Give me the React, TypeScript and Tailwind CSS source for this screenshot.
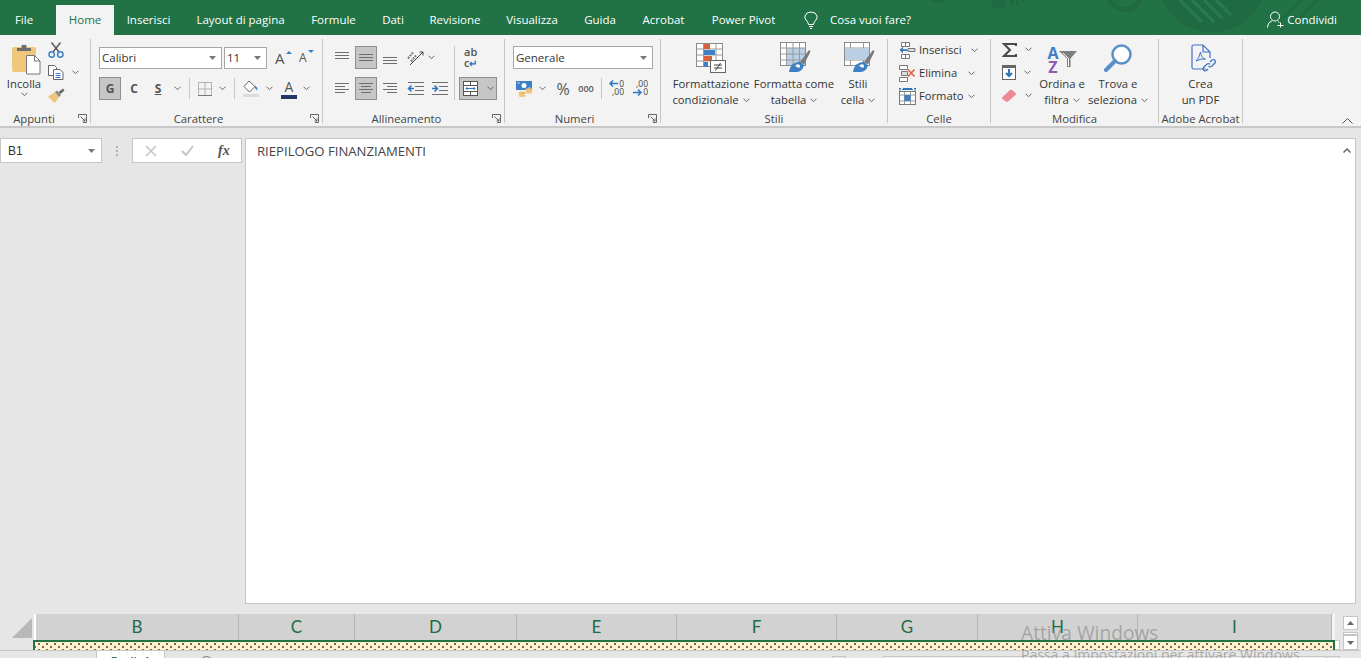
import React from "react";

const Chev = ({ className = "" }: { className?: string }) => (
  <svg width="7" height="5" viewBox="0 0 7 5" className={"shrink-0 " + className}>
    <path d="M.5.7 3.5 3.7 6.5.7" fill="none" stroke="#666" />
  </svg>
);
const Tri = () => (
  <svg width="7" height="4" viewBox="0 0 7 4" className="shrink-0">
    <path d="M0 0h7L3.500 4z" fill="#777" />
  </svg>
);
const Launcher = () => (
  <svg width="9" height="9" viewBox="0 0 9 9" className="absolute right-[3px] bottom-0">
    <path d="M.5 4V.5H8.500V8.500H5M2.500 2.500 7 7M4.500 7H7V4.500" fill="none" stroke="#666" />
  </svg>
);

const Group = ({ w, label, launcher, labelPad = "", children }: { w: string; label: string; launcher?: boolean; labelPad?: string; children: React.ReactNode }) => (
  <section className={"relative flex h-[84px] flex-col border-r border-[#c6c6c6] " + w}>
    <div className="flex h-[72px] min-h-0 shrink-0">{children}</div>
    <div className={"mt-[1px] shrink-0 whitespace-nowrap text-center text-[11.3px] leading-[13px] text-[#444] " + labelPad}>{label}</div>
    {launcher && <Launcher />}
  </section>
);

const Big = ({ w, icon, l1, l2, chev = true }: { w: string; icon: React.ReactNode; l1: string; l2: string; chev?: boolean }) => (
  <div className={"flex flex-col items-center text-[11.3px] leading-[16px] text-[#333] " + w}>
    <div className="flex h-[37px] items-center justify-center">{icon}</div>
    <div className="whitespace-nowrap">{l1}</div>
    <div className="flex items-center gap-[4px] whitespace-nowrap">
      {l2}
      {chev && <Chev />}
    </div>
  </div>
);

const Lines = ({ v, h }: { v: "top" | "mid" | "bot" | "none"; h: "l" | "c" | "r" }) => {
  const w = [14, 10, 14, 10];
  const ys = v === "top" ? [2, 5, 8] : v === "mid" ? [4, 7, 10] : v === "bot" ? [7, 10, 13] : [2, 5, 8, 11];
  return (
    <svg width="16" height="15" viewBox="0 0 16 15">
      {ys.map((y, i) => {
        const ln = v === "none" ? w[i] : 14;
        const x = h === "l" ? 1 : h === "r" ? 15 - ln : 8 - ln / 2;
        return <path key={y} d={`M${x} ${y + 0.5}h${ln}`} stroke="#6e6e6e" />;
      })}
    </svg>
  );
};

const Sel = ({ on, w = "w-[22px]", children }: { on?: boolean; w?: string; children: React.ReactNode }) => (
  <div className={"flex h-[23px] items-center justify-center " + w + " " + (on ? "border border-[#8f8f8f] bg-[#c6c6c6]" : "")}>
    {children}
  </div>
);

const Paste = () => (
  <svg width="29" height="31" viewBox="0 0 29 31">
    <rect x="0" y="3" width="24" height="25" rx="2" fill="#f0c87d" />
    <path d="M5 7V4h4.500V1.500Q12 0 14.500 1.500V4H19v3z" fill="#6d6d6d" />
    <path d="M14.500 11.500h8l5.500 5.500v13H14.500z" fill="#fff" stroke="#777" />
    <path d="M22.500 11.500V17H28" fill="none" stroke="#777" />
  </svg>
);
const Scissors = () => (
  <svg width="16" height="16" viewBox="0 0 16 16">
    <path d="M5 10 12.500.5M11 10 3.500.5" stroke="#5a5a5a" strokeWidth="1.500" fill="none" />
    <circle cx="3.700" cy="12.500" r="2.700" fill="none" stroke="#3f80c4" strokeWidth="1.500" />
    <circle cx="12.300" cy="12.500" r="2.700" fill="none" stroke="#3f80c4" strokeWidth="1.500" />
  </svg>
);
const Copy = () => (
  <svg width="16" height="15" viewBox="0 0 16 15">
    <path d="M.5.500h6l2 2v8H.5z" fill="#fff" stroke="#666" />
    <path d="M5.500 4.500h6.500l3 3v7H5.500z" fill="#fff" stroke="#666" />
    <path d="M7.500 8.500h5M7.500 10.500h5M7.500 12.500h5" stroke="#3f80c4" />
  </svg>
);
const Brush = () => (
  <svg width="17" height="15" viewBox="0 0 17 15">
    <path d="M0 8.500 7 4l4 5-4 6Q3 12 0 8.500z" fill="#eec57c" />
    <path d="M7 4l4 5 2-2-4-4.500z" fill="#888" />
    <path d="M10.500 4 15 .5l1.500 2-4 3.500z" fill="#666" />
  </svg>
);
const Bucket = () => (
  <svg width="17" height="17" viewBox="0 0 17 17">
    <path d="M6 1 1 6.500l5.500 5.500L12 6.500z" fill="#fff" stroke="#666" />
    <path d="M12 5.500 14.500 8 14 10.500 12 8z" fill="#3f80c4" />
    <path d="M0 14h16v3H0z" fill="#dcdcdc" />
  </svg>
);
const Borders = () => (
  <svg width="14" height="14" viewBox="0 0 14 14">
    <rect x=".5" y=".5" width="13" height="13" fill="none" stroke="#777" strokeDasharray="1 1" />
    <path d="M7 .5v13M.5 7h13" stroke="#777" strokeDasharray="1 1" />
    <path d="M0 13.500h14" stroke="#777" />
  </svg>
);
const Orient = () => (
  <svg width="17" height="17" viewBox="0 0 17 17" className="overflow-visible">
    <path d="M3 16 16 3M16 3h-3.500M16 3v3.500" stroke="#444" fill="none" />
    <path d="M1 9.500l5-6M4 12.500l5-6" stroke="#777" strokeWidth="2" strokeDasharray="2 1" />
  </svg>
);
const Indent = ({ dir }: { dir: "l" | "r" }) => (
  <svg width="17" height="14" viewBox="0 0 17 14">
    <path d="M1 .5h16M8 4.500h9M8 8.500h9M1 12.500h16" stroke="#6e6e6e" />
    {dir === "l" ? (
      <path d="M7 6.500H2M4.500 3.500 1.500 6.500l3 3" stroke="#2f75bb" strokeWidth="1.500" fill="none" />
    ) : (
      <path d="M1 6.500h5M3.500 3.500l3 3-3 3" stroke="#2f75bb" strokeWidth="1.500" fill="none" />
    )}
  </svg>
);
const Merge = () => (
  <svg width="15" height="15" viewBox="0 0 15 15">
    <rect x=".5" y=".5" width="14" height="14" fill="#fff" stroke="#555" />
    <path d="M.5 4.500h14M.5 10.500h14M7.500.5v4M7.500 10.500v4" stroke="#555" />
    <path d="M3 7.500h9M4.500 6 3 7.500 4.500 9M10.500 6 12 7.500 10.500 9" stroke="#2f75bb" fill="none" />
  </svg>
);
const Money = () => (
  <svg width="17" height="17" viewBox="0 0 17 17">
    <path d="M0 1h16v9H0z" fill="#3a7fc7" />
    <circle cx="8" cy="5.500" r="2.500" fill="#fff" />
    <path d="M1.500 3h2M12.500 8h2" stroke="#fff" />
    <ellipse cx="13" cy="9.500" rx="3.500" ry="1.500" fill="#e9bc6c" />
    <ellipse cx="13" cy="12" rx="3.500" ry="1.500" fill="#f0c87d" />
    <ellipse cx="6" cy="13" rx="3.500" ry="1.500" fill="#e9bc6c" />
    <ellipse cx="6" cy="15.500" rx="3.500" ry="1.500" fill="#f0c87d" />
  </svg>
);
const DecIcon = ({ more }: { more: boolean }) => (
  <div className="relative h-[17px] w-[15px] text-[8.500px] leading-[8px] text-[#444]">
    {more ? (
      <>
        <div className="text-right">0</div>
        <div className="text-right">,00</div>
        <svg width="9" height="7" viewBox="0 0 9 7" className="absolute top-0 left-0">
          <path d="M9 3.500H1M4 .5l-3 3 3 3" stroke="#2f75bb" strokeWidth="1.500" fill="none" />
        </svg>
      </>
    ) : (
      <>
        <div className="text-right">,00</div>
        <div className="text-right">0</div>
        <svg width="9" height="7" viewBox="0 0 9 7" className="absolute bottom-[1px] left-0">
          <path d="M0 3.500h8M5 .5l3 3-3 3" stroke="#2f75bb" strokeWidth="1.500" fill="none" />
        </svg>
      </>
    )}
  </div>
);
const Grid = ({ fill }: { fill?: boolean }) => (
  <>
    <rect x=".5" y=".5" width="25" height="23" fill="#fff" stroke="#8a8a8a" />
    {fill && <rect x="6" y="6" width="19" height="17" fill="#b9cfe6" />}
    <path d="M.5 6h25M.5 12h25M.5 18h25M6.500.5v23M13 .5v23M19.500.5v23" stroke="#9a9a9a" />
  </>
);
const CondFmt = () => (
  <svg width="30" height="30" viewBox="0 0 30 30">
    <rect x=".5" y=".5" width="26" height="23" fill="#fff" stroke="#8a8a8a" />
    <path d="M.5 6h26M.5 12h26M.5 18h26M7.500.5v23M20 .5v23" stroke="#9a9a9a" />
    <rect x="8" y="1" width="6" height="5" fill="#d9603a" />
    <rect x="8" y="7" width="11" height="5" fill="#3f80c4" />
    <rect x="8" y="13" width="8" height="5" fill="#d9603a" />
    <rect x="8" y="19" width="4" height="5" fill="#3f80c4" />
    <rect x="14.500" y="17.500" width="15" height="12" fill="#fff" stroke="#666" />
    <path d="M18 22h8M18 25h8M24.500 20l-5 7.500" stroke="#444" fill="none" />
  </svg>
);
const PaintBrush = () => (
  <>
    <path d="M20 20 29 8l1.500 1.500-6.500 13z" fill="#7a7a7a" />
    <path d="M9 30q1-7 6-9l5-1.500 4 4q-2 6.500-7 6.500z" fill="#3f80c4" />
    <path d="M15 24q2-2.500 4-1.500t0 3.500" fill="#fff" />
  </>
);
const TableFmt = () => (
  <svg width="31" height="31" viewBox="0 0 31 31">
    <Grid fill />
    <PaintBrush />
  </svg>
);
const CellStyle = () => (
  <svg width="31" height="31" viewBox="0 0 31 31">
    <rect x=".5" y=".5" width="25" height="23" fill="#fff" stroke="#8a8a8a" />
    <path d="M.5 6h25M.5 18h25M6.500.5V6M6.500 18v5.500M19.500.5V6M19.500 18v5.500" stroke="#9a9a9a" />
    <rect x="1" y="6.500" width="24" height="11" fill="#b9cfe6" />
    <PaintBrush />
  </svg>
);
const Ins = () => (
  <svg width="17" height="17" viewBox="0 0 17 17">
    <path d="M2.500.5h8v4h-8zM2.500 12.500h8v4h-8zM2.500 8.500h8M6.500.5v4M6.500 12.500v4" fill="#fff" stroke="#777" />
    <path d="M9 6.500h7v3H9z" fill="#dcdcdc" stroke="#777" />
    <path d="M8 8H1.500M4 5.500 1.500 8 4 10.500" stroke="#2f75bb" strokeWidth="1.300" fill="none" />
  </svg>
);
const Del = () => (
  <svg width="17" height="17" viewBox="0 0 17 17">
    <path d="M.5.500h8v4h-8zM.5 12.500h8v4h-8z" fill="#fff" stroke="#777" />
    <path d="M2.500 6.500h6v4h-6z" fill="#dcdcdc" stroke="#777" />
    <path d="M9 4.500l6.500 7M15.500 4.500 9 11.500" stroke="#e2603f" strokeWidth="1.600" />
  </svg>
);
const Fmt = () => (
  <svg width="17" height="17" viewBox="0 0 17 17">
    <path d="M0 .5h2M4 .5h9M15 .5h2M1 0v3M16 0v3M3 1.500h11" stroke="#2f75bb" />
    <rect x=".5" y="3.500" width="16" height="13" fill="#fff" stroke="#777" />
    <path d="M.5 7h16M.5 13h16M5.500 3.500v13M11.500 3.500v13" stroke="#999" />
    <rect x="5.500" y="7" width="6" height="6" fill="#3f80c4" />
  </svg>
);
const Sigma = () => (
  <svg width="15" height="14" viewBox="0 0 15 14">
    <path d="M14 3V1H2l6 6-6 6h12v-2" fill="none" stroke="#4a4a4a" strokeWidth="2" />
  </svg>
);
const FillDown = () => (
  <svg width="14" height="15" viewBox="0 0 14 15">
    <rect x=".5" y=".5" width="13" height="14" fill="#fff" stroke="#666" />
    <rect x="0" y="0" width="14" height="3" fill="#666" />
    <path d="M7 4v7M4 8l3 3 3-3" stroke="#2f75bb" strokeWidth="2" fill="none" />
  </svg>
);
const Eraser = () => (
  <svg width="14" height="13" viewBox="0 0 14 13">
    <path d="M0 8.500 8 1q1-1 2 0l3.500 3q1 1 0 2L6 12.500q-1 .8-2 0L.5 10Q-.5 9 0 8.500z" fill="#ee8896" />
  </svg>
);
const Funnel = () => (
  <svg width="18" height="16" viewBox="0 0 18 16" className="-mt-[2px]">
    <path d="M0 0h18l-6.500 7.500V16H8V7.500z" fill="#7d7d7d" />
    <path d="M4 2 9.500 7.500V15" fill="none" stroke="#fff" />
  </svg>
);
const Magnifier = () => (
  <svg width="28" height="28" viewBox="0 0 28 28">
    <circle cx="17.500" cy="10.500" r="9" fill="#fff" stroke="#5a8fc8" strokeWidth="2.500" />
    <path d="M11 17 2 26" stroke="#5a8fc8" strokeWidth="4" strokeLinecap="round" />
  </svg>
);
const Pdf = () => (
  <svg width="26" height="28" viewBox="0 0 26 28" className="ml-[6px]">
    <path d="M15 25H2.500Q1 25 1 23.500V2.500Q1 1 2.500 1H12l7 7v6M12 1v7h7" fill="none" stroke="#3f73c4" strokeWidth="1.200" />
    <path d="M5 17q3-2 4.500-9 .5 6 5 7-5-.5-9.500 2" fill="none" stroke="#3f73c4" />
    <path d="M15 24l-1.500 1.500q-2 1-3-.5t.5-3l3-3q2-1 3 .5M17 17l2-2q2-1 3 .5t-.5 3l-3 3q-2 1-3-.5" fill="none" stroke="#3f73c4" strokeWidth="1.300" transform="translate(2 1)" />
  </svg>
);

const tabs: [string, string][] = [
  ["Inserisci", "w-[69px]"],
  ["Layout di pagina", "w-[115px]"],
  ["Formule", "w-[71px]"],
  ["Dati", "w-[48px]"],
  ["Revisione", "w-[76px]"],
  ["Visualizza", "w-[78px]"],
  ["Guida", "w-[58px]"],
  ["Acrobat", "w-[69px]"],
  ["Power Pivot", "w-[91px]"],
];

const columns: [string, string][] = [
  ["B", "w-[203px]"],
  ["C", "w-[116px]"],
  ["D", "w-[162px]"],
  ["E", "w-[160px]"],
  ["F", "w-[160px]"],
  ["G", "w-[141px]"],
  ["H", "w-[160px]"],
  ["I", "w-[194px]"],
];

export default function App() {
  return (
    <div className="relative flex h-[658px] w-[1361px] flex-col overflow-hidden bg-[#e6e6e6] font-['Open_Sans','Liberation_Sans',sans-serif] text-[11.5px] text-[#333]">
      {/* Title / tab bar */}
      <header className="relative flex h-[35px] shrink-0 items-end bg-[#217346] text-[11.5px] text-white">
        <svg width="431" height="35" viewBox="0 0 431 35" className="absolute top-0 right-0">
          <path d="M62 0h13v8H62zM0 0h12l4 3H5zM80 0h3v6h-3zM86 0h3v5h-3zM92 0h2v3h-2z" fill="#1f6a41" />
          <circle cx="195" cy="-6" r="16" fill="none" stroke="#1f6a41" strokeWidth="5" />
          <circle cx="282" cy="-23" r="55" fill="#1f6a41" />
          <path d="M250 0l22 22M262 0l22 22M274 0l18 18M286 0l15 15" stroke="#2a7a50" strokeWidth="3" />
          <path d="M350 20 372 0M364 22 388 0" stroke="#1f6a41" strokeWidth="3" />
        </svg>
        <div className="relative flex h-[30px] w-[56px] items-center justify-center pr-[8px] pb-[1px]">File</div>
        <div className="relative flex h-[30px] w-[58px] items-center justify-center bg-[#f3f3f3] pb-[1px] text-[#217346]">Home</div>
        {tabs.map(([t, w]) => (
          <div key={t} className={"relative flex h-[30px] items-center justify-center whitespace-nowrap pb-[1px] " + w}>
            {t}
          </div>
        ))}
        <div className="relative ml-[15px] flex h-[30px] items-center gap-[12px] pb-[1px]">
          <svg width="14" height="18" viewBox="0 0 14 18">
            <path d="M4.500 13.500Q4 10.500 2 9 .5 7 1 5q1-4 6-4t6 4q.5 2-1 4-2 1.500-2.500 4.500zM5 15.500h4M6 17.500h2" fill="none" stroke="#fff" />
          </svg>
          Cosa vuoi fare?
        </div>
        <div className="relative ml-auto mr-[24px] flex h-[30px] items-center gap-[3px] pb-[1px]">
          <svg width="17" height="17" viewBox="0 0 17 17">
            <circle cx="8" cy="5.500" r="4.500" fill="none" stroke="#fff" />
            <path d="M.5 16.500Q1 11 5 10M11 10.500l1.500 1M10.500 14.500h6M13.500 11.500v5" fill="none" stroke="#fff" />
          </svg>
          Condividi
        </div>
      </header>

      {/* Ribbon */}
      <div className="relative flex h-[93px] shrink-0 border-b-2 border-[#c8c8c8] bg-[#f3f3f3] pt-[4px]">
        <Group w="w-[91px]" label="Appunti" launcher labelPad="pr-[22px]">
          <div className="ml-[6px] w-[36px]">
            <Big
              w="w-[36px]"
              chev
              icon={<div className="ml-[5px] mt-[3px]"><Paste /></div>}
              l1="Incolla"
              l2=""
            />
          </div>
          <div className="-mt-px ml-[6px] flex flex-col">
            <div className="flex h-[23px] items-center"><Scissors /></div>
            <div className="flex h-[23px] items-center gap-[8px]"><Copy /><Chev /></div>
            <div className="flex h-[23px] items-center"><Brush /></div>
          </div>
        </Group>

        <Group w="w-[232px]" label="Carattere" launcher labelPad="pr-[16px]">
          <div className="ml-[8px] flex flex-col">
            <div className="mt-[8px] flex h-[22px] items-center">
              <div className="flex h-[22px] w-[123px] items-center justify-between border border-[#a6a6a6] bg-white pr-[5px] pl-[2px] text-[#333]">
                Calibri <Tri />
              </div>
              <div className="ml-[2px] flex h-[22px] w-[43px] items-center justify-between border border-[#a6a6a6] bg-white pr-[5px] pl-[2px]">
                11 <Tri />
              </div>
              <div className="relative ml-[8px] w-[16px] text-[15px] leading-none text-[#555]">
                A
                <svg width="6" height="3" viewBox="0 0 6 3" className="absolute top-0 -right-[1px]"><path d="M0 3 3 0l3 3z" fill="#3f80c4" /></svg>
              </div>
              <div className="relative ml-[8px] w-[14px] text-[12px] leading-none text-[#555]">
                A
                <svg width="6" height="3" viewBox="0 0 6 3" className="absolute -top-[2px] -right-[1px]"><path d="M0 0h6L3 3z" fill="#3f80c4" /></svg>
              </div>
            </div>
            <div className="mt-[8px] flex h-[23px] items-center text-[12px] font-bold text-[#555]">
              <Sel on>G</Sel>
              <div className="ml-[2px] w-[22px] text-center">C</div>
              <div className="ml-[2px] w-[22px] text-center underline">S</div>
              <Chev className="ml-[5px]" />
              <div className="ml-[8px] h-[21px] w-px bg-[#c6c6c6]" />
              <div className="ml-[8px]"><Borders /></div>
              <Chev className="ml-[7px]" />
              <div className="ml-[8px] h-[21px] w-px bg-[#c6c6c6]" />
              <div className="ml-[8px]"><Bucket /></div>
              <Chev className="ml-[6px]" />
              <div className="relative ml-[8px] flex h-[20px] w-[16px] flex-col items-center text-[14px] font-normal leading-[16px] text-[#555]">
                A
                <div className="h-[4px] w-[16px] bg-[#1f3864]" />
              </div>
              <Chev className="ml-[6px]" />
            </div>
          </div>
        </Group>

        <Group w="w-[182px]" label="Allineamento" launcher labelPad="pr-[14px]">
          <div className="ml-[10px] flex flex-col">
            <div className="mt-[7px] flex h-[23px] items-center">
              <Sel w="w-[18px]"><Lines v="top" h="c" /></Sel>
              <div className="ml-[4px]"><Sel on><Lines v="mid" h="c" /></Sel></div>
              <div className="ml-[2px]"><Sel><Lines v="bot" h="c" /></Sel></div>
              <div className="ml-[6px]"><Orient /></div>
              <Chev className="ml-[4px]" />
            </div>
            <div className="mt-[8px] flex h-[23px] items-center">
              <Sel w="w-[18px]"><Lines v="none" h="l" /></Sel>
              <div className="ml-[4px]"><Sel on><Lines v="none" h="c" /></Sel></div>
              <div className="ml-[2px]"><Sel><Lines v="none" h="r" /></Sel></div>
              <div className="ml-[6px]"><Indent dir="l" /></div>
              <div className="ml-[7px]"><Indent dir="r" /></div>
            </div>
          </div>
          <div className="ml-[6px] mt-[7px] h-[54px] w-px bg-[#c6c6c6]" />
          <div className="ml-[4px] flex flex-col">
            <div className="mt-[7px] flex h-[23px] flex-col items-start pl-[5px] text-[11px] font-semibold leading-[11px] text-[#555]">
              <span>ab</span>
              <span>c<span className="text-[10px] text-[#2f75bb]">↵</span></span>
            </div>
            <div className="mt-[8px] flex h-[23px] w-[38px] items-center gap-[9px] border border-[#8f8f8f] bg-[#c6c6c6] pl-[3px]">
              <Merge /><Chev />
            </div>
          </div>
        </Group>

        <Group w="w-[156px]" label="Numeri" launcher labelPad="pr-[16px]">
          <div className="ml-[8px] flex flex-col">
            <div className="mt-[7px] flex h-[23px] w-[140px] items-center justify-between border border-[#a6a6a6] bg-white pr-[5px] pl-[2px]">
              Generale <Tri />
            </div>
            <div className="mt-[8px] flex h-[23px] items-center">
              <div className="ml-[3px]"><Money /></div>
              <Chev className="ml-[6px]" />
              <div className="ml-[9px] w-[16px] text-center text-[16px] text-[#555]">%</div>
              <div className="ml-[7px] w-[16px] text-center text-[9px] font-semibold text-[#555]">000</div>
              <div className="ml-[7px] h-[21px] w-px bg-[#c6c6c6]" />
              <div className="ml-[7px]"><DecIcon more /></div>
              <div className="ml-[9px]"><DecIcon more={false} /></div>
            </div>
          </div>
        </Group>

        <Group w="w-[227px]" label="Stili">
          <Big w="ml-[11px] w-[78px]" icon={<CondFmt />} l1="Formattazione" l2="condizionale" />
          <Big w="ml-[3px] w-[82px]" icon={<div className="ml-[2px]"><TableFmt /></div>} l1="Formatta come" l2="tabella" />
          <Big w="ml-[3px] w-[40px]" icon={<div className="ml-[3px]"><CellStyle /></div>} l1="Stili" l2="cella" />
        </Group>

        <Group w="w-[103px]" label="Celle">
          <div className="ml-[11px] flex flex-col text-[11.200px]">
            <div className="flex h-[23px] items-center gap-[3px]"><Ins />Inserisci<Chev className="ml-[6px]" /></div>
            <div className="flex h-[23px] items-center gap-[3px]"><Del />Elimina<Chev className="ml-[8px]" /></div>
            <div className="flex h-[23px] items-center gap-[3px]"><Fmt />Formato<Chev className="ml-[2px]" /></div>
          </div>
        </Group>

        <Group w="w-[168px]" label="Modifica">
          <div className="-mt-px ml-[11px] flex w-[30px] shrink-0 flex-col">
            <div className="flex h-[23px] items-center gap-[8px]"><Sigma /><Chev /></div>
            <div className="flex h-[23px] items-center gap-[8px]"><FillDown /><Chev /></div>
            <div className="flex h-[23px] items-center gap-[9px]"><Eraser /><Chev /></div>
          </div>
          <Big
            w="ml-[4px] w-[52px]"
            icon={
              <div className="mt-[4px] flex items-center">
                <div className="flex flex-col text-center text-[16px] font-bold leading-[14px]">
                  <span className="text-[#3f80c4]">A</span>
                  <span className="text-[#8e5bb5]">Z</span>
                </div>
                <Funnel />
              </div>
            }
            l1="Ordina e"
            l2="filtra"
          />
          <Big w="ml-[2px] w-[56px]" icon={<Magnifier />} l1="Trova e" l2="seleziona" />
        </Group>

        <Group w="w-[84px]" label="Adobe Acrobat">
          <Big w="w-[83px]" icon={<Pdf />} l1="Crea" l2="un PDF" chev={false} />
        </Group>

        <svg width="11" height="6" viewBox="0 0 11 6" className="absolute right-[8px] bottom-[2px]">
          <path d="M.5 5.500 5.500.5l5 5" fill="none" stroke="#555" />
        </svg>
      </div>

      {/* Formula area */}
      <main className="flex min-h-0 flex-1 pt-[10px] pr-[5px] pb-[10px]">
        <div className="flex h-[25px] w-[245px] shrink-0 items-center">
          <div className="flex h-[25px] w-[102px] items-center justify-between border border-[#c6c6c6] bg-white pr-[6px] pl-[7px] font-['Liberation_Sans',sans-serif] text-[12px]">
            B1 <Tri />
          </div>
          <div className="ml-[14px] flex flex-col gap-[2px]">
            <div className="h-[2px] w-[2px] bg-[#b0b0b0]" />
            <div className="h-[2px] w-[2px] bg-[#b0b0b0]" />
            <div className="h-[2px] w-[2px] bg-[#b0b0b0]" />
          </div>
          <div className="ml-[14px] flex h-[25px] w-[110px] items-center border border-[#c6c6c6] bg-white pl-[12px]">
            <svg width="12" height="12" viewBox="0 0 12 12"><path d="M1 1l10 10M11 1 1 11" stroke="#c4c4c4" strokeWidth="1.500" /></svg>
            <svg width="13" height="11" viewBox="0 0 13 11" className="ml-[24px]"><path d="M1 6l4 4 7-9" fill="none" stroke="#c4c4c4" strokeWidth="2" /></svg>
            <span className="ml-[24px] font-['Liberation_Serif',serif] text-[14px] font-bold italic text-[#555]">fx</span>
          </div>
        </div>
        <div className="relative flex-1 border border-[#c6c6c6] bg-white px-[11px] py-[3px] text-[13.150px] text-[#444]">
          RIEPILOGO FINANZIAMENTI
          <svg width="8" height="5" viewBox="0 0 8 5" className="absolute top-[9px] right-[4px]">
            <path d="M.5 4.500 4 1l3.500 3.500" fill="none" stroke="#666" strokeWidth="1.500" />
          </svg>
        </div>
      </main>

      {/* Column headers */}
      <div className="flex h-[26px] shrink-0">
        <div className="flex w-[34px] shrink-0 items-end">
          <svg width="20" height="20" viewBox="0 0 20 20" className="mb-[2px] ml-[12px]"><path d="M0 20 20 0v20z" fill="#b8b8b8" /></svg>
        </div>
        <div className="w-[2px] shrink-0 bg-white" />
        <div className="flex shrink-0 bg-[#d2d2d2]">
          {columns.map(([c, w]) => (
            <div key={c} className={"flex h-[26px] items-center justify-center border-r border-[#b5b5b5] font-['Lato',sans-serif] text-[17px] text-[#1e6b46] " + w}>
              {c}
            </div>
          ))}
        </div>
        <div className="w-[3px] shrink-0 bg-[#f4f4f4]" />
        <div className="ml-[8px] flex flex-col pt-[2px]">
          <div className="flex h-[14px] w-[15px] items-center justify-center border border-[#c6c6c6] bg-white">
            <svg width="7" height="4" viewBox="0 0 7 4"><path d="M0 4 3.500 0 7 4z" fill="#666" /></svg>
          </div>
          <div className="mt-[2px] h-[3px] w-[15px] border border-[#c6c6c6] bg-white" />
        </div>
      </div>

      {/* Selected row */}
      <div className="flex h-[10px] shrink-0">
        <div className="ml-[33px] h-[10px] w-[1302px] border-x-2 border-t-2 border-[#217346] bg-[#fff2cc] bg-[radial-gradient(circle,#222_0.6px,transparent_0.9px),radial-gradient(circle,#222_0.6px,transparent_0.9px)] bg-[length:8px_6px] bg-[position:0_-1px,4px_2px]" />
        <div className="h-[10px] w-[5px] border border-l-0 border-[#c6c6c6] bg-white" />
        <div className="-mt-[5px] ml-[3px] flex h-[15px] w-[15px] items-center justify-center border border-[#c6c6c6] bg-white">
          <svg width="7" height="4" viewBox="0 0 7 4"><path d="M0 0h7L3.500 4z" fill="#666" /></svg>
        </div>
      </div>

      {/* Sheet tabs and horizontal scroller */}
      <footer className="relative flex h-[8px] shrink-0 border-t border-[#c6c6c6]">
        <div className="ml-[96px] h-[12px] w-[69px] shrink-0 border-x border-[#c6c6c6] bg-white pt-[3px] text-center text-[11.5px] font-semibold leading-[14px] text-[#217346]">
          Foglio1
        </div>
        <div className="ml-[35px] mt-[5px] h-[13px] w-[13px] shrink-0 rounded-full border border-[#777]" />
        <div className="ml-[619px] mt-[5px] h-[10px] w-[14px] shrink-0 border border-[#c6c6c6]" />
        <div className="ml-[37px] mt-[5px] h-[10px] w-[442px] shrink-0 border border-[#c6c6c6] bg-[#f0f0f0]" />
        <div className="ml-px mt-[5px] h-[10px] w-[14px] shrink-0 border border-[#c6c6c6]" />
      </footer>

      {/* Windows activation watermark */}
      <div className="pointer-events-none absolute top-[621px] left-[1021px] whitespace-nowrap font-['Open_Sans',sans-serif] text-[#8f8f8f]/70">
        <div className="text-[19.200px] leading-[24px]">Attiva Windows</div>
        <div className="text-[14px] leading-[20px]">Passa a Impostazioni per attivare Windows.</div>
      </div>
    </div>
  );
}
